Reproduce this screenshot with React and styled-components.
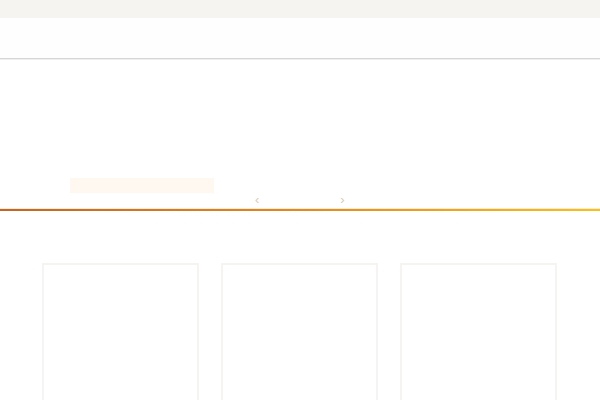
import React from 'react'
import styled, { createGlobalStyle } from 'styled-components'

const GlobalStyle = createGlobalStyle`
  body {
    margin: 0;
    background: #ffffff;
    font-family: "Liberation Sans", Arial, sans-serif;
    overflow: hidden;
  }
`

const Page = styled.div`
  width: 600px;
  height: 400px;
  overflow: hidden;
`

const TopBar = styled.div`
  height: 18px;
  background: #f5f4f0;
`

const Header = styled.header`
  height: 40px;
  background: #fefefe;
  border-bottom: 1px solid #d6d6d6;
  box-shadow: 0 1px 0 #efefef;
`

const Hero = styled.section`
  height: 150px;
  display: flex;
  flex-direction: column;
  justify-content: flex-end;
  padding: 0 0 0 70px;
`

const Tagline = styled.div`
  width: 144px;
  height: 15px;
  background: #fff8f0;
`

const SliderNav = styled.div`
  display: flex;
  gap: 81px;
  margin: 0 0 2px 185px;
  height: 14px;
  align-items: flex-start;
`

const NavArrow = styled.span`
  font-size: 13px;
  line-height: 1;
  color: #dccab0;
`

const Divider = styled.div`
  height: 2px;
  background: linear-gradient(90deg, #bf6628 0%, #e08a22 50%, #f5c21c 100%);
  box-shadow: 0 -1px 0 #fbe9d2;
`

const Cards = styled.section`
  display: flex;
  gap: 22px;
  padding: 52px 0 0 42px;
`

const Card = styled.div`
  width: 153px;
  height: 180px;
  flex-shrink: 0;
  border: 2px solid #f5f4f1;
  background: #ffffff;
`

export default function App() {
  return (
    <Page>
      <GlobalStyle />
      <TopBar />
      <Header />
      <Hero>
        <Tagline />
        <SliderNav>
          <NavArrow>‹</NavArrow>
          <NavArrow>›</NavArrow>
        </SliderNav>
      </Hero>
      <Divider />
      <Cards>
        <Card />
        <Card />
        <Card />
      </Cards>
    </Page>
  )
}
